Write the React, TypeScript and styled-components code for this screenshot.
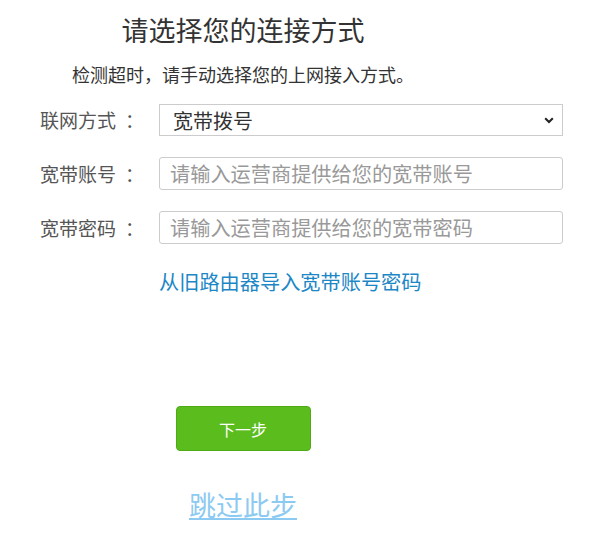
import React from "react";
import styled, { createGlobalStyle } from "styled-components";

const Global = createGlobalStyle`
  html, body { margin: 0; padding: 0; background: #fff; }
  body {
    font-family: "Noto Sans CJK SC", "Microsoft YaHei", sans-serif;
  }
  * { box-sizing: border-box; }
`;

const Page = styled.div`
  width: 600px;
  height: 539px;
  overflow: hidden;
  display: flex;
  flex-direction: column;
`;

const CenterColumn = styled.div`
  width: 486px;
  display: flex;
  flex-direction: column;
  align-items: center;
`;

const Title = styled.h1`
  margin: 12px 0 0;
  font-size: 27px;
  line-height: 36px;
  font-weight: normal;
  color: #333;
`;

const Subtitle = styled.p`
  margin: 14px 0 0 72px;
  font-size: 18px;
  line-height: 24px;
  color: #333;
`;

const Colon = styled.span`
  margin-left: 9px;
`;

const Form = styled.div`
  margin-top: 18px;
  padding-left: 40px;
  display: flex;
  flex-direction: column;
  gap: 21px;
`;

const Row = styled.div`
  display: flex;
  align-items: center;
`;

const Label = styled.label`
  width: 119px;
  font-size: 19px;
  color: #555;
  line-height: 24px;
  white-space: nowrap;
`;

const FieldBox = styled.div`
  position: relative;
  width: 404px;
`;

const Select = styled.select`
  appearance: none;
  -webkit-appearance: none;
  width: 404px;
  height: 32px;
  padding: 0 30px 0 13px;
  border: 1px solid #ccc;
  border-radius: 0;
  background: #fff;
  font-family: inherit;
  font-size: 20px;
  color: #333;
  outline: none;
`;

const Chevron = styled.svg`
  position: absolute;
  right: 9px;
  top: 13px;
  width: 10px;
  height: 7px;
  pointer-events: none;
`;

const Input = styled.input`
  width: 404px;
  height: 33px;
  padding: 0 10px;
  border: 1px solid #ccc;
  border-radius: 3px;
  font-family: inherit;
  font-size: 20.2px;
  color: #333;
  outline: none;
  &::placeholder { color: #999; }
`;

const ImportLink = styled.a`
  margin: 24px 0 0 159px;
  font-size: 20.2px;
  line-height: 28px;
  color: #1d87c6;
  text-decoration: none;
  cursor: pointer;
  align-self: flex-start;
`;

const NextButton = styled.button`
  margin-top: 110px;
  width: 135px;
  height: 45px;
  border: 1px solid #4eab16;
  border-radius: 4px;
  background: #5bbd1d;
  color: #fff;
  font-family: inherit;
  font-size: 16px;
  cursor: pointer;
`;

const SkipLink = styled.a`
  margin-top: 36px;
  font-size: 27px;
  line-height: 36px;
  color: #8ccaf1;
  text-decoration: underline;
  text-underline-offset: 2px;
  cursor: pointer;
`;

const fields = [
  { label: "宽带账号", placeholder: "请输入运营商提供给您的宽带账号" },
  { label: "宽带密码", placeholder: "请输入运营商提供给您的宽带密码" },
];

export default function App() {
  return (
    <>
      <Global />
      <Page lang="zh-CN">
        <CenterColumn>
          <Title>请选择您的连接方式</Title>
        </CenterColumn>
        <Subtitle>检测超时，请手动选择您的上网接入方式。</Subtitle>
        <Form>
          <Row>
            <Label>
              联网方式<Colon>：</Colon>
            </Label>
            <FieldBox>
              <Select defaultValue="pppoe">
                <option value="pppoe">宽带拨号</option>
                <option value="dhcp">自动获取IP</option>
                <option value="static">固定IP</option>
              </Select>
              <Chevron viewBox="0 0 10 7">
                <path d="M1.2 1.2 L5 5 L8.8 1.2" fill="none" stroke="#222" strokeWidth="2" />
              </Chevron>
            </FieldBox>
          </Row>
          {fields.map((f) => (
            <Row key={f.label}>
              <Label>
                {f.label}
                <Colon>：</Colon>
              </Label>
              <FieldBox>
                <Input type="text" placeholder={f.placeholder} />
              </FieldBox>
            </Row>
          ))}
        </Form>
        <ImportLink>从旧路由器导入宽带账号密码</ImportLink>
        <CenterColumn>
          <NextButton>下一步</NextButton>
          <SkipLink>跳过此步</SkipLink>
        </CenterColumn>
      </Page>
    </>
  );
}
